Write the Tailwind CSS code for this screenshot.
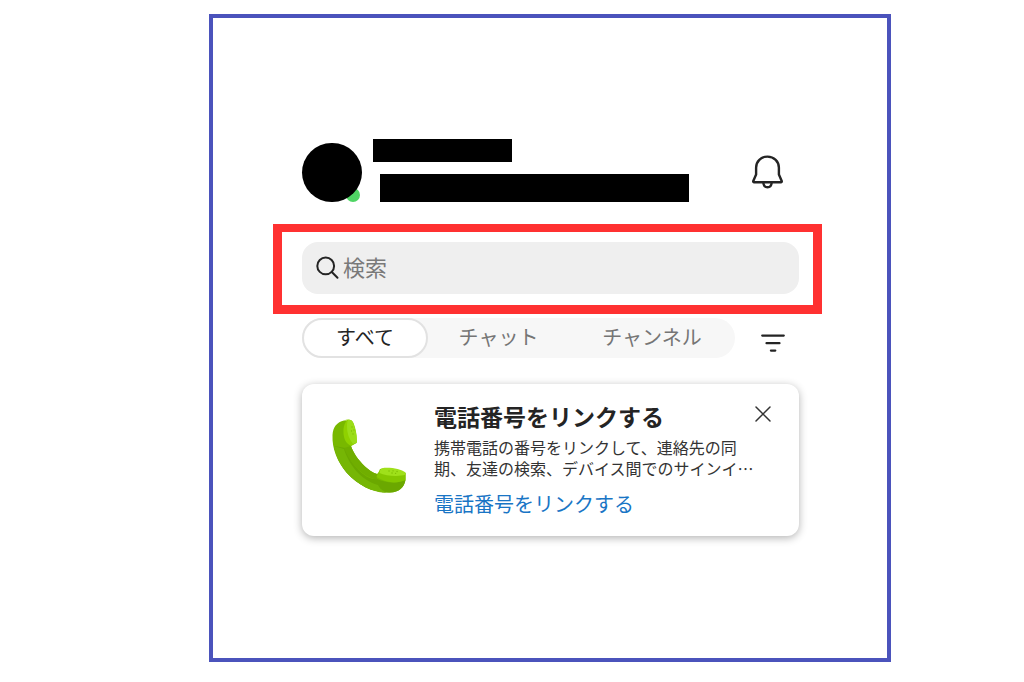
<!DOCTYPE html>
<html lang="ja">
<head>
    <meta charset="UTF-8">
    <meta name="viewport" content="width=device-width, initial-scale=1.0">
    <title>チャット</title>
    <script src="https://cdn.jsdelivr.net/npm/@tailwindcss/browser@4"></script>
</head>
<body class="bg-white font-['Noto_Sans_CJK_JP',sans-serif] text-[#242424]">
    <div class="min-h-screen flex pt-[14px] pb-5 pl-[209px] pr-[133px]">
        <main class="flex-1 min-w-0 border-4 border-[#4b53bc] pt-[121px] pl-[60px] pr-[65px]">

            <!-- Profile -->
            <header class="flex items-start pl-[29px] pr-[39px]">
                <div class="relative mt-1 mr-[11px] shrink-0">
                    <span class="absolute right-0.5 bottom-0 size-[14px] rounded-full bg-[#4fd564]"></span>
                    <div class="relative w-[60px] h-[59px] rounded-full bg-black"></div>
                </div>
                <div class="flex-1 min-w-0">
                    <div class="w-[139px] h-[23px] bg-black"></div>
                    <div class="mt-3 ml-[7px] w-[309px] h-7 bg-black"></div>
                </div>
                <button type="button" aria-label="通知" class="mt-4 shrink-0">
                    <svg class="block w-8 h-[34px]" viewBox="0 0 32 34" fill="none" stroke="#242424" stroke-width="2.4" stroke-linejoin="round">
                        <path d="M16.500 1.600C9.900 1.600 5.100 6.400 5.100 12.700V19.500L2.300 26Q1.900 27.200 3.100 27.200H29.900Q31.100 27.200 30.700 26L27.900 19.500V12.700C27.900 6.400 23.100 1.600 16.500 1.600Z"/>
                        <path d="M12.300 27.500C12.500 30.500 14.100 32.300 16.500 32.300S20.500 30.500 20.700 27.500"/>
                    </svg>
                </button>
            </header>

            <!-- Search -->
            <section class="mt-[22px] border-[9px] border-t-8 border-[#ff3131] pt-[10px] pb-[11px] pl-5 pr-[14px]">
                <label class="flex items-start h-[52px] rounded-2xl bg-[#efefef] pt-1.5 pl-[14px]">
                    <svg class="block size-6 mt-2 shrink-0" viewBox="0 0 24 24" fill="none" stroke="#242424" stroke-width="2" stroke-linecap="round">
                        <circle cx="9.700" cy="9.900" r="8.400"/>
                        <path d="M15.800 16L21.500 21.800"/>
                    </svg>
                    <input type="search" aria-label="検索" placeholder="検索" class="flex-1 min-w-0 ml-[3px] h-9 text-[22px] leading-9 outline-none placeholder:text-[#7a7a7a]">
                </label>
            </section>

            <!-- Filters -->
            <nav class="flex items-start mt-1 pl-[29px] pr-[37px]">
                <div class="flex flex-1 min-w-0 h-10 rounded-full bg-[#f7f7f7] text-xl text-[#757575]">
                    <button type="button" class="w-[126px] rounded-full border-2 border-[#e2e2e2] bg-white text-[#242424] pb-0.5">すべて</button>
                    <button type="button" class="w-[141px] pb-0.5">チャット</button>
                    <button type="button" class="flex-1 pb-0.5">チャンネル</button>
                </div>
                <button type="button" aria-label="フィルター" class="mt-4 ml-[26px]">
                    <svg class="block w-6 h-5" viewBox="0 0 24 20" stroke="#242424" stroke-width="2.200" stroke-linecap="round">
                        <path d="M1.200 1.600H22.800M5.500 9.200H18.500M9.900 16.600H14.300"/>
                    </svg>
                </button>
            </nav>

            <!-- Phone number card -->
            <div class="pl-[29px] pr-[23px] mt-[26px]">
                <article class="flex items-start rounded-xl bg-white shadow-[0_2px_9px_rgba(0,0,0,0.3)] pl-[30px] pr-7 pb-4">
                    <svg class="block mt-[35px] mr-7 size-[74px] shrink-0" viewBox="0 0 74 74">
                        <path fill="#78b800" d="M12 1.500L20 2 24.500 24L19 27C20 30 22 34 24 37C29 44 36 52 45 55L50 50 73.500 54V61C72 69 67 73 58 73.500C41 74 26 66 15 54C5 42 0 30 .5 16C1 8 5 3 12 1.500Z"/>
                        <path fill="#6ba800" d="M2 27C5 42 15 54 15 54C26 66 41 74 58 73.500C67 73 72 69 73.500 61C64 65 54 64 45 60C33 61 20 47 13 29Z"/>
                        <path fill="#76b605" d="M2 27C4 38 8 46 15 54C26 66 41 74 54 73.500C50 71 48 70 46 66C29 61 17 46 12 30Z"/>
                        <path fill="#70ae00" d="M12 29L19 27C20 30 22 34 24 37C29 44 36 52 45 55L45 61C29 57 18 44 12 29Z"/>
                        <path fill="#8fd100" d="M12 1.500C16-.2 20 .5 21.500 4C24 10 25 17 24.800 23.500L19 27C13 24 11 18 11.500 10C12 6 13 3.500 15 1.500Z"/>
                        <path fill="#9bdd18" d="M16 1C20 0 21.500 4 22.500 8C24.500 14 25 19 24.800 23.500L21 25C17 20 15 14 15 8C15 5 15.300 2 16 1Z"/>
                        <path fill="#84c700" d="M48 50C56 48 66 50 73.500 54V61C64 65 54 64 44.500 58Z"/>
                        <path fill="#9fe01a" d="M50 49.200C58 48 69 50 73.500 53.500V55.500C67 58 54 57 47.500 54Q48 50 50 49.200Z"/>
                        <path fill="none" stroke="#7fbd04" stroke-width="1.300" stroke-linecap="round" d="M20 8V8.100M19.500 12V12.100M22 11V11.100M21 15V15.100M57 52H57.100M61 51.800H61.100M65 52.500H65.100M60 54H60.100M63.500 54.300H63.600"/>
                    </svg>
                    <div class="flex-1 min-w-0">
                        <div class="flex items-start justify-between">
                            <h2 class="mt-[14px] text-[23px] leading-9 font-bold whitespace-nowrap">電話番号をリンクする</h2>
                            <button type="button" aria-label="閉じる" class="mt-[22px]">
                                <svg class="block size-4" viewBox="0 0 16 16" stroke="#333" stroke-width="1.500" stroke-linecap="round">
                                    <path d="M1 1L15 15M15 1L1 15"/>
                                </svg>
                            </button>
                        </div>
                        <p class="mt-[3px] text-base leading-[21px] text-[#333] whitespace-nowrap">携帯電話の番号をリンクして、連絡先の同<br>期、友達の検索、デバイス間でのサインイ…</p>
                        <a href="#" class="block mt-[9px] text-xl leading-8 text-[#1975c5]">電話番号をリンクする</a>
                    </div>
                </article>
            </div>
        </main>
    </div>
</body>
</html>
